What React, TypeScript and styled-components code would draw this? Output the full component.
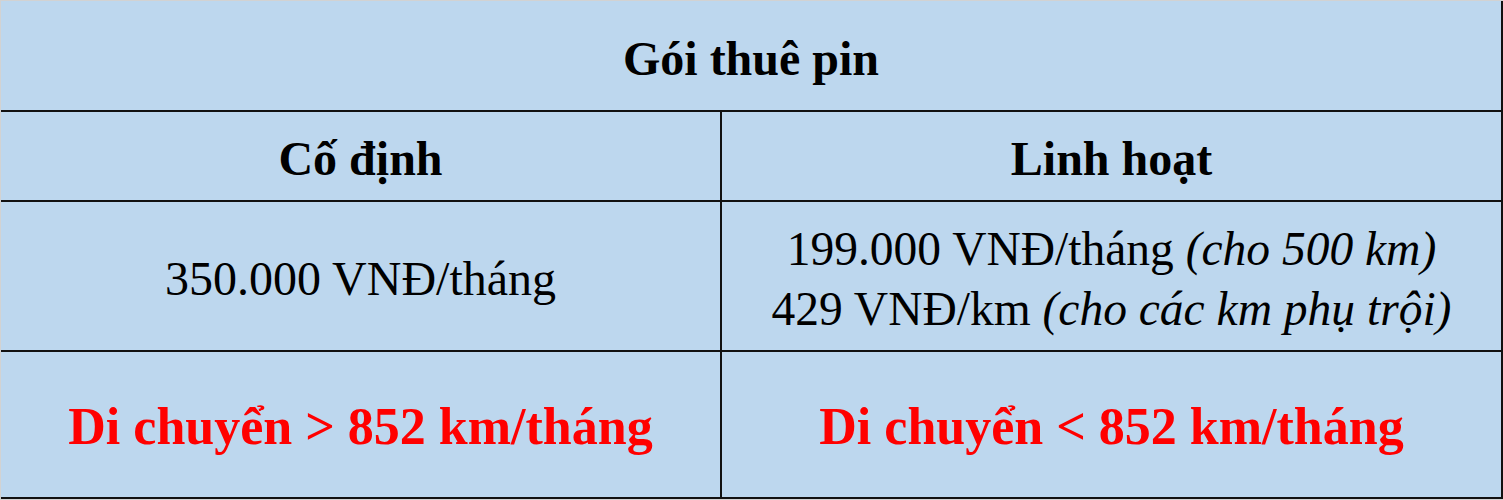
import React from 'react'
import styled, {createGlobalStyle} from 'styled-components'

const GlobalStyle = createGlobalStyle`
  html, body {
    margin: 0;
    padding: 0;
    background: #d2d2d2;
  }

  * {
    box-sizing: border-box;
  }
`

const Page = styled.div`
  width: 1503px;
  height: 500px;
  padding: 1px 0 0 1px;
`

const Table = styled.div`
  display: grid;
  grid-template-columns: 721px 781px;
  grid-template-rows: 111px 90px 150px 147px;
  width: 1502px;
  background: #bdd7ee;
  font-family: "Liberation Serif", "Times New Roman", serif;
  color: #000;
`

const Cell = styled.div<{ $span?: boolean }>`
  grid-column: ${p => (p.$span ? '1 / span 2' : 'auto')};
  display: flex;
  align-items: center;
  justify-content: center;
  flex-direction: column;
  padding-top: ${p => (p.$span ? '6px' : '5px')};
  border-bottom: 2px solid #111;
  border-right: 2px solid #111;
  text-align: center;
`

const Heading = styled.div`
  font-size: 48px;
  font-weight: bold;
  line-height: 1.15;
`

const Price = styled.div<{ $size?: number }>`
  font-size: ${p => p.$size ?? 48}px;
  line-height: 60px;
  white-space: nowrap;

  & em {
    font-style: italic;
  }
`

const Verdict = styled.div`
  font-size: 52px;
  font-weight: bold;
  color: #ff0000;
  line-height: 1.15;
  white-space: nowrap;
`

function App() {
    return (
        <>
            <GlobalStyle/>
            <Page>
                <Table>
                    <Cell $span>
                        <Heading>Gói thuê pin</Heading>
                    </Cell>

                    <Cell>
                        <Heading>Cố định</Heading>
                    </Cell>
                    <Cell>
                        <Heading>Linh hoạt</Heading>
                    </Cell>

                    <Cell>
                        <Price>350.000 VNĐ/tháng</Price>
                    </Cell>
                    <Cell>
                        <Price $size={47.5}>199.000 VNĐ/tháng <em>(cho 500 km)</em></Price>
                        <Price $size={47.5}>429 VNĐ/km <em>(cho các km phụ trội)</em></Price>
                    </Cell>

                    <Cell>
                        <Verdict>Di chuyển &gt; 852 km/tháng</Verdict>
                    </Cell>
                    <Cell>
                        <Verdict>Di chuyển &lt; 852 km/tháng</Verdict>
                    </Cell>
                </Table>
            </Page>
        </>
    );
}

export default App;
